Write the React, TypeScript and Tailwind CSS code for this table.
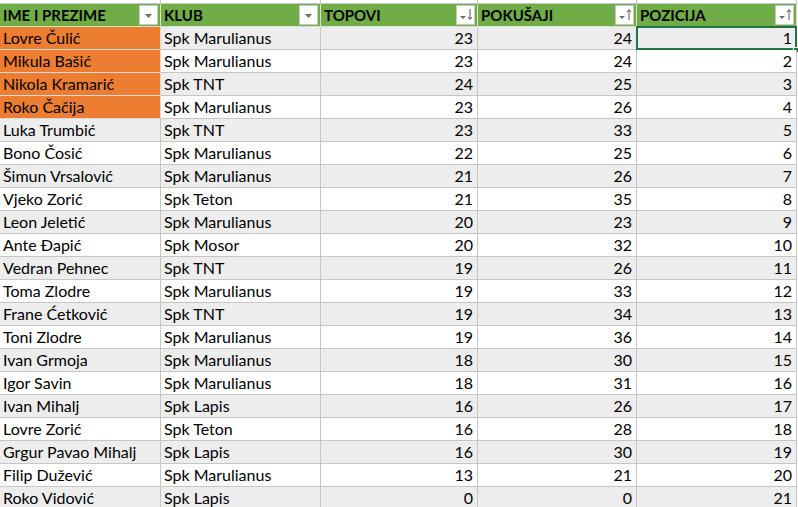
import React from "react";

type Row = [string, string, number, number];

const rows: Row[] = [
  ["Lovre Čulić", "Spk Marulianus", 23, 24],
  ["Mikula Bašić", "Spk Marulianus", 23, 24],
  ["Nikola Kramarić", "Spk TNT", 24, 25],
  ["Roko Čačija", "Spk Marulianus", 23, 26],
  ["Luka Trumbić", "Spk TNT", 23, 33],
  ["Bono Čosić", "Spk Marulianus", 22, 25],
  ["Šimun Vrsalović", "Spk Marulianus", 21, 26],
  ["Vjeko Zorić", "Spk Teton", 21, 35],
  ["Leon Jeletić", "Spk Marulianus", 20, 23],
  ["Ante Đapić", "Spk Mosor", 20, 32],
  ["Vedran Pehnec", "Spk TNT", 19, 26],
  ["Toma Zlodre", "Spk Marulianus", 19, 33],
  ["Frane Ćetković", "Spk TNT", 19, 34],
  ["Toni Zlodre", "Spk Marulianus", 19, 36],
  ["Ivan Grmoja", "Spk Marulianus", 18, 30],
  ["Igor Savin", "Spk Marulianus", 18, 31],
  ["Ivan Mihalj", "Spk Lapis", 16, 26],
  ["Lovre Zorić", "Spk Teton", 16, 28],
  ["Grgur Pavao Mihalj", "Spk Lapis", 16, 30],
  ["Filip Dužević", "Spk Marulianus", 13, 21],
  ["Roko Vidović", "Spk Lapis", 0, 0],
];

const cols = "grid grid-cols-[161px_160px_157px_159px_160px]";

function FilterButton({ sort }: { sort?: "up" | "down" }) {
  return (
    <div className="absolute right-[2px] top-[1px] w-[19px] h-[20px] bg-white border border-[#c8c8c8] flex items-center justify-center">
      <svg width="17" height="18" viewBox="0 0 17 18">
        <path d={sort ? "M3 10 L9 10 L6 13 Z" : "M5 8 L12 8 L8.5 12 Z"} fill="#6b6b6b" />
        {sort === "down" && (
          <path d="M13 3 L13 13 M11 11 L13 13.5 L15 11" stroke="#555" strokeWidth="1" fill="none" />
        )}
        {sort === "up" && (
          <path d="M13 4 L13 14 M11 6 L13 3.5 L15 6" stroke="#555" strokeWidth="1" fill="none" />
        )}
      </svg>
    </div>
  );
}

function Head({ label, sort }: { label: string; sort?: "up" | "down" }) {
  return (
    <div className="relative h-[23px] bg-[#70ad47] border-r border-b border-[#d4e6c8] px-[3px] flex items-center font-bold text-[15px] text-black">
      {label}
      <FilterButton sort={sort} />
    </div>
  );
}

export default function App() {
  return (
    <div
      className="w-[798px] h-[507px] overflow-hidden bg-white text-[16px] text-black leading-none"
      style={{ fontFamily: "Lato, 'Open Sans', sans-serif" }}
    >
      <div className={cols}>
        {[0, 1, 2, 3, 4].map((i) => (
          <div key={i} className="h-[4px] border-r border-b border-[#c6c6c6] bg-white" />
        ))}
        <Head label="IME I PREZIME" />
        <Head label="KLUB" />
        <Head label="TOPOVI" sort="down" />
        <Head label="POKUŠAJI" sort="up" />
        <Head label="POZICIJA" sort="up" />
        {rows.map((r, i) => {
          const band = i % 2 === 0 ? "bg-[#ededed]" : "bg-white";
          const orange = i < 4;
          const cell = "h-[23px] border-r border-b border-[#c6c6c6] flex items-center";
          return (
            <React.Fragment key={i}>
              <div className={`${cell} px-[3px] ${orange ? "bg-[#ed7d31] border-[#d9d9d9]" : band}`}>{r[0]}</div>
              <div className={`${cell} px-[3px] ${band}`}>{r[1]}</div>
              <div className={`${cell} justify-end pr-[4px] ${band}`}>{r[2]}</div>
              <div className={`${cell} justify-end pr-[4px] ${band}`}>{r[3]}</div>
              <div className={`${cell} relative justify-end pr-[4px] ${band}`}>
                {i + 1}
                {i === 0 && (
                  <>
                    <div className="absolute left-[-1px] top-[-1px] right-[-1px] bottom-[-1px] border-2 border-[#217346]" />
                    <div className="absolute right-[-3px] bottom-[-4px] w-[6px] h-[6px] bg-[#217346] border border-white" />
                  </>
                )}
              </div>
            </React.Fragment>
          );
        })}
      </div>
    </div>
  );
}
